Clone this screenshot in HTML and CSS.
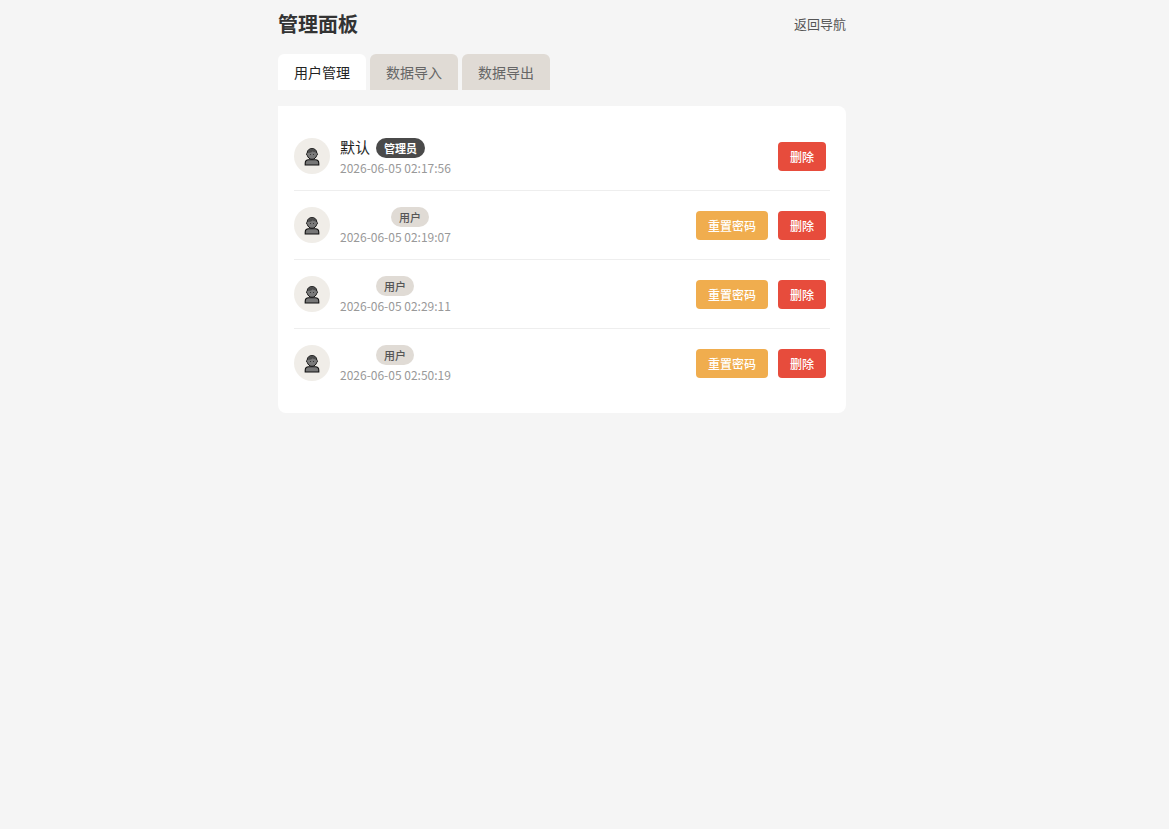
FILE: index.html
```html
<!DOCTYPE html>
<html lang="zh-CN">
<head>
    <meta charset="UTF-8">
    <meta name="viewport" content="width=device-width, initial-scale=1.0">
    <title>管理面板</title>
    <link rel="stylesheet" href="styles.css">
</head>
<body>

    <!-- Shared avatar icon -->
    <svg class="icon-defs" aria-hidden="true">
        <symbol id="user-icon" viewBox="0 0 16 20">
            <path d="M1.2 19v-1.6c0-2.2 1.3-3.6 3.5-3.6h6.6c2.2 0 3.5 1.4 3.5 3.6v1.6z" fill="#777" stroke="#111" stroke-width="1.1"/>
            <path d="M8 2.6c3 0 4.7 1.8 4.8 4.4.9.4.9 2 0 2.3-.6 2.3-2.5 4-4.8 4s-4.2-1.7-4.8-4c-.9-.3-.9-1.9 0-2.3.1-2.6 1.8-4.4 4.8-4.4z" fill="#7a7a7a" stroke="#111" stroke-width="1"/>
            <path d="M3.8 6.8c0-2.2 1.8-3.8 4.2-3.8s4 1.4 4.2 3.4c-1.6.1-2.8-.4-3.4-1.2-1 1-2.8 1.8-5 1.6z" fill="#4c4c4c"/>
            <circle cx="6.5" cy="8.6" r=".5" fill="#222"/>
            <circle cx="9.5" cy="8.6" r=".5" fill="#222"/>
        </symbol>
    </svg>

    <div class="container">
        <header class="header">
            <h1>管理面板</h1>
            <a href="#" class="back-link">返回导航</a>
        </header>

        <!-- Tabs -->
        <nav class="tabs">
            <button type="button" class="tab active">用户管理</button>
            <button type="button" class="tab">数据导入</button>
            <button type="button" class="tab">数据导出</button>
        </nav>

        <!-- User list -->
        <main class="panel">
            <div class="user-row">
                <div class="avatar"><svg><use href="#user-icon"/></svg></div>
                <div class="user-info">
                    <div class="user-name"><span>默认</span><span class="badge badge-admin">管理员</span></div>
                    <div class="user-date">2026-06-05 02:17:56</div>
                </div>
                <div class="actions">
                    <button type="button" class="btn btn-delete">删除</button>
                </div>
            </div>
            <div class="user-row">
                <div class="avatar"><svg><use href="#user-icon"/></svg></div>
                <div class="user-info">
                    <div class="user-name"><span>&#12288;&#12288;&#12288;</span><span class="badge">用户</span></div>
                    <div class="user-date">2026-06-05 02:19:07</div>
                </div>
                <div class="actions">
                    <button type="button" class="btn btn-reset">重置密码</button>
                    <button type="button" class="btn btn-delete">删除</button>
                </div>
            </div>
            <div class="user-row">
                <div class="avatar"><svg><use href="#user-icon"/></svg></div>
                <div class="user-info">
                    <div class="user-name"><span>&#12288;&#12288;</span><span class="badge">用户</span></div>
                    <div class="user-date">2026-06-05 02:29:11</div>
                </div>
                <div class="actions">
                    <button type="button" class="btn btn-reset">重置密码</button>
                    <button type="button" class="btn btn-delete">删除</button>
                </div>
            </div>
            <div class="user-row">
                <div class="avatar"><svg><use href="#user-icon"/></svg></div>
                <div class="user-info">
                    <div class="user-name"><span>&#12288;&#12288;</span><span class="badge">用户</span></div>
                    <div class="user-date">2026-06-05 02:50:19</div>
                </div>
                <div class="actions">
                    <button type="button" class="btn btn-reset">重置密码</button>
                    <button type="button" class="btn btn-delete">删除</button>
                </div>
            </div>
        </main>
    </div>

</body>
</html>
```
FILE: styles.css
```css
* {
    box-sizing: border-box;
}

body {
    margin: 0;
    padding-right: 45px;
    background: #f5f5f5;
    color: #333;
    font-family: "Noto Sans CJK SC", sans-serif;
}

button {
    border: none;
    font-family: inherit;
    cursor: pointer;
}

.icon-defs {
    display: none;
}

.container {
    max-width: 600px;
    margin: 0 auto;
    padding: 8px 16px;
}

/* Header */
.header {
    display: flex;
    align-items: center;
    justify-content: space-between;
    margin-bottom: 14px;
}

h1 {
    margin: 0;
    font-size: 20px;
    line-height: 32px;
}

.back-link {
    color: #555;
    font-size: 13px;
    line-height: 18px;
    text-decoration: none;
}

/* Tabs */
.tabs {
    display: flex;
    gap: 4px;
    margin-bottom: 16px;
}

.tab {
    padding: 8px 16px;
    background: #e0dbd5;
    border-radius: 6px 6px 0 0;
    color: #666;
    font-size: 14px;
    line-height: 20px;
}

.tab.active {
    background: #fff;
    color: #222;
}

/* User list */
.panel {
    padding: 16px;
    background: #fff;
    border-radius: 0 8px 8px 8px;
}

.user-row {
    display: flex;
    align-items: center;
    gap: 10px;
    padding: 13px 4px 13px 0;
    border-bottom: 1px solid #eee;
}

.user-row:last-child {
    border-bottom: none;
}

.avatar {
    display: flex;
    align-items: center;
    justify-content: center;
    width: 36px;
    height: 36px;
    background: #f0ede8;
    border-radius: 50%;
}

.avatar svg {
    width: 16px;
    height: 20px;
}

.user-info {
    flex: 1;
    padding-top: 1px;
}

.user-name {
    display: flex;
    align-items: flex-end;
    gap: 6px;
    color: #222;
    font-size: 15px;
    line-height: 22px;
}

.badge {
    padding: 0 8px;
    background: #e0dbd5;
    border-radius: 10px;
    color: #555;
    font-size: 11px;
    font-weight: 500;
    line-height: 20px;
}

.badge-admin {
    background: #4a4a4a;
    color: #fff;
    font-weight: 600;
}

.user-date {
    color: #999;
    font-size: 12px;
    line-height: 19px;
}

.actions {
    display: flex;
    gap: 10px;
}

.btn {
    padding: 6px 12px;
    border-radius: 4px;
    color: #fff;
    font-size: 12px;
    font-weight: 500;
    line-height: 17px;
}

.btn-reset {
    background: #f0ad4e;
}

.btn-delete {
    background: #e74c3c;
}
```
